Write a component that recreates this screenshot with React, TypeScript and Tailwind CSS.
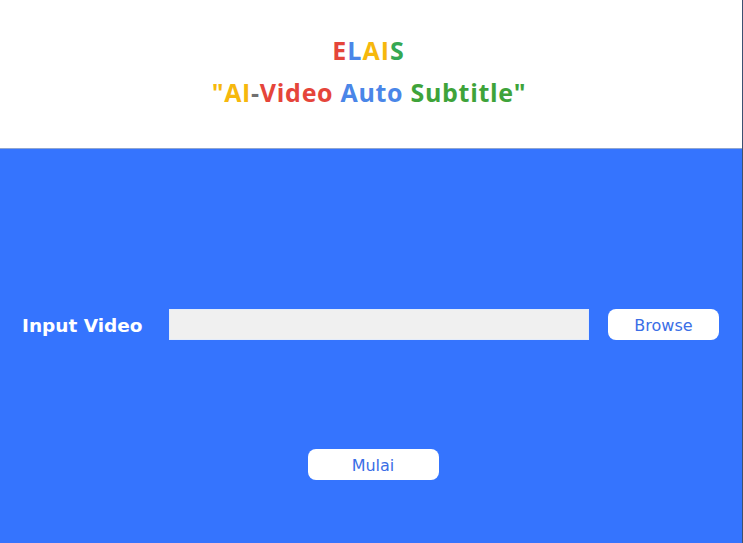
export default function App() {
  return (
    <div className="w-[743px] h-[543px] flex flex-col border-r border-[#3c5070] overflow-hidden">
      <div className="h-[148px] bg-white flex flex-col items-center pt-[32px] shrink-0" style={{ fontFamily: '"Open Sans", sans-serif' }}>
        <div className="text-[25px] font-bold leading-[37px] tracking-[1px] pr-[5px]">
          <span className="text-[#e5453a]">E</span>
          <span className="text-[#4a86e8]">L</span>
          <span className="text-[#f6b80d]">AI</span>
          <span className="text-[#35a853]">S</span>
        </div>
        <div className="text-[25px] font-bold leading-[37px] mt-[5px] tracking-[0.7px] pr-[4px]">
          <span className="text-[#f6b80d]">"AI</span>
          <span className="text-[#707070]">-</span>
          <span className="text-[#e5453a]">Video </span>
          <span className="text-[#4a86e8]">Auto </span>
          <span className="text-[#3ea33a]">Subtitle"</span>
        </div>
      </div>
      <div className="h-px bg-[#8fa5d0] shrink-0" />
      <div className="flex-1 bg-[#3574fe] flex flex-col pt-[160px]" style={{ fontFamily: '"DejaVu Sans", Tahoma, sans-serif' }}>
        <div className="flex items-center h-[31px]">
          <div className="w-[169px] pl-[22px] pt-[3px] text-white font-bold text-[18.5px]">Input Video</div>
          <div className="w-[420px] h-[31px] bg-[#f0f0f0] border border-[#e4ecfa]" />
          <button className="ml-[19px] w-[111px] h-[31px] pt-[3px] bg-white rounded-[8px] text-[#3a6ee6] text-[16px]">Browse</button>
        </div>
        <div className="flex justify-center mt-[109px] pl-[4px]">
          <button className="w-[131px] h-[31px] pt-[2px] bg-white rounded-[8px] text-[#3a6ee6] text-[16px]">Mulai</button>
        </div>
      </div>
    </div>
  );
}
